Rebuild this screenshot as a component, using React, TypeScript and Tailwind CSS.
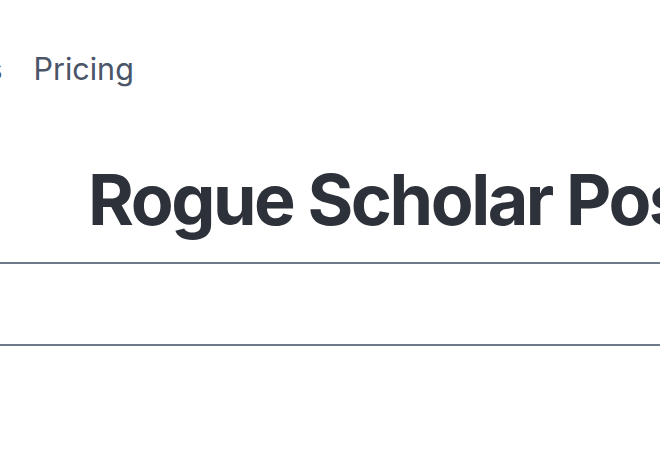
export default function App() {
  return (
    <div className="h-[458px] w-[660px] overflow-hidden bg-white font-['Inter','Liberation_Sans',sans-serif]">
      {/* Top navigation, scrolled past the left edge */}
      <nav className="flex items-center gap-[31px] pt-[49px] ml-[-77px] text-[30.5px] leading-[40px] text-[#4a5568] whitespace-nowrap">
        <span>Posts</span>
        <span>Pricing</span>
      </nav>

      {/* Page title */}
      <h1 className="mt-[71px] pl-[88px] text-[70px] leading-[80px] font-bold tracking-[-0.035em] text-[#2d3139] whitespace-nowrap">
        Rogue Scholar Posts
      </h1>

      {/* Divider band */}
      <div className="mt-[22px] h-[84px] border-y-2 border-[#6e7a89]" />
    </div>
  );
}
